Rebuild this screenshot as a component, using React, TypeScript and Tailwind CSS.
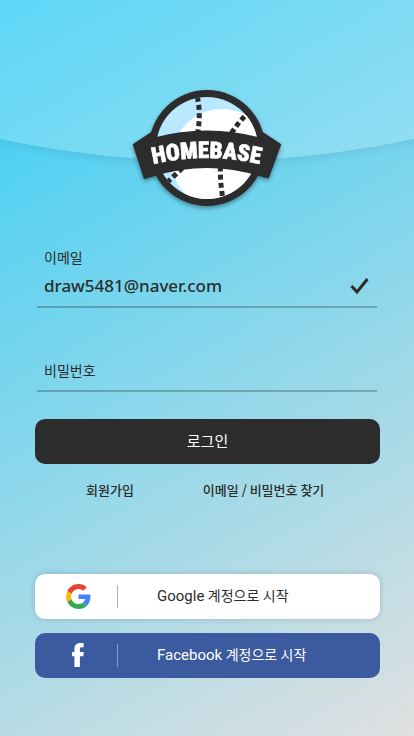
import React from "react";

function HomebaseLogo() {
  return (
    <svg
      role="img"
      aria-label="HOMEBASE"
      viewBox="0 0 160 128"
      className="h-32 w-40 drop-shadow-[0_2px_2px_rgba(0,0,0,0.4)]"
    >
      <defs>
        <clipPath id="ball">
          <circle cx="80" cy="62" r="51" />
        </clipPath>
        <path id="baseline" d="M15 81 Q79.5 63 144 81" />
      </defs>
      <circle cx="80" cy="62" r="58" fill="#2c2c2c" />
      <g clipPath="url(#ball)">
        <rect width="160" height="128" fill="#b9e8ff" />
        <circle cx="95" cy="73.5" r="50.5" fill="#fff" />
        <g fill="none" stroke="#2c2c2c" strokeWidth="5" strokeDasharray="5 3.2">
          <path d="M70.3 11 Q74.2 28 70.4 49" />
          <path d="M117.5 30.5 Q110 38 103 49.5" />
          <path d="M55.5 82 L38 98.5" />
          <path d="M93.4 80.5 Q93 96 95.8 112" />
        </g>
      </g>
      <path
        d="M25 45.5 L5.7 58.3 L17 93.2 L28 90 Q80 74 132 90 L141.7 92.5 L154.3 58.3 L133.5 44.5 L133 51.5 Q80 37.5 27 51.5 Z"
        fill="#2c2c2c"
      />
      <text
        className="font-['Liberation_Sans_Narrow','Roboto_Condensed',Roboto,sans-serif] text-[23px] font-black"
        fill="#fff"
        stroke="#fff"
        strokeWidth="0.6"
        textAnchor="middle"
      >
        <textPath href="#baseline" startOffset="50%">
          HOMEBASE
        </textPath>
      </text>
    </svg>
  );
}

function GoogleIcon() {
  return (
    <svg aria-hidden="true" viewBox="0 0 48 48" className="size-[25px]">
      <path fill="#EA4335" d="M24 9.5c3.54 0 6.71 1.22 9.21 3.6l6.85-6.85C35.9 2.38 30.47 0 24 0 14.62 0 6.51 5.38 2.56 13.22l7.98 6.19C12.43 13.72 17.74 9.5 24 9.5z" />
      <path fill="#4285F4" d="M46.98 24.55c0-1.57-.15-3.09-.38-4.55H24v9.02h12.94c-.58 2.96-2.26 5.48-4.78 7.18l7.73 6c4.51-4.18 7.09-10.36 7.09-17.65z" />
      <path fill="#FBBC05" d="M10.53 28.59c-.48-1.45-.76-2.99-.76-4.59s.27-3.14.76-4.59l-7.98-6.19C.92 16.46 0 20.12 0 24c0 3.88.92 7.54 2.56 10.78l7.97-6.19z" />
      <path fill="#34A853" d="M24 48c6.48 0 11.93-2.13 15.89-5.81l-7.73-6c-2.15 1.45-4.92 2.3-8.16 2.3-6.26 0-11.57-4.22-13.47-9.91l-7.98 6.19C6.51 42.62 14.62 48 24 48z" />
    </svg>
  );
}

function FacebookIcon() {
  return (
    <svg aria-hidden="true" viewBox="0 0 12 24" className="mb-px h-6 w-3" fill="#fff">
      <path d="M2.4 24V13.2H0V9h2.4V6.3C2.4 2.3 4.2 0 8.3 0H11.6v4.3H9.7C8.1 4.3 7.9 4.8 7.9 6v3h3.8l-.4 4.2H7.9V24z" />
    </svg>
  );
}

interface SocialButtonProps {
  icon: React.ReactNode;
  brand: string;
  tone: string;
  divider: string;
}

function SocialButton({ icon, brand, tone, divider }: SocialButtonProps) {
  return (
    <button
      type="button"
      className={`flex h-[45px] w-full items-center rounded-[10px] text-left font-[Roboto,'Noto_Sans_CJK_KR',sans-serif] text-sm ${tone}`}
    >
      <span className="ml-[30px] flex w-[26px] justify-center">{icon}</span>
      <span className={`ml-[26px] h-[23px] w-px ${divider}`} />
      <span className="ml-[39px]">
        <span className="text-[15px]">{brand}</span> 계정으로 시작
      </span>
    </button>
  );
}

export default function App() {
  return (
    <main className="relative min-h-screen overflow-hidden bg-[linear-gradient(150.6deg,#35cef6,#e0e0e0)] pr-[34px] pl-[35px] font-['Noto_Sans_CJK_KR',sans-serif] text-[#2c2c2c]">
      <div className="absolute -top-[1809px] left-1/2 size-[1970px] -translate-x-1/2 rounded-full bg-white/20 shadow-[0_3px_8px_rgba(0,0,0,0.08)]" />

      <div className="relative">
        <header className="flex justify-center pt-[86px] pr-0.5">
          <HomebaseLogo />
        </header>

        <form className="pt-[33px]" onSubmit={(e) => e.preventDefault()}>
          <div className="mr-[3px] ml-[2px] border-b-2 border-[#2c2c2c]/30 pl-[7px]">
            <label htmlFor="email" className="block text-sm leading-5">
              이메일
            </label>
            <div className="flex h-[39px] items-center pb-[2px]">
              <input
                id="email"
                type="email"
                defaultValue="draw5481@naver.com"
                className="min-w-0 flex-1 bg-transparent font-['Noto_Sans',sans-serif] text-[17px] leading-6 font-medium outline-none"
              />
              <svg aria-hidden="true" viewBox="0 0 20 18" className="mr-[7px] h-[18px] w-5">
                <path d="M1.5 9 L7 15 L17.5 2" fill="none" stroke="#2c2c2c" strokeWidth="3" />
              </svg>
            </div>
          </div>

          <div className="mt-[52px] mr-[3px] ml-[2px] border-b-2 border-[#2c2c2c]/30 pl-[7px]">
            <input
              type="password"
              aria-label="비밀번호"
              placeholder="비밀번호"
              className="block h-[30px] w-full bg-transparent pb-[10px] text-sm leading-5 outline-none placeholder:text-[#2c2c2c]"
            />
          </div>

          <button
            type="submit"
            className="mt-[27px] h-[45px] w-full rounded-[10px] bg-[#2c2c2c] text-[15px] text-white"
          >
            로그인
          </button>
        </form>

        <nav className="mt-4 flex pl-[51px] text-[13px] leading-5 font-medium">
          <a href="#signup">회원가입</a>
          <a href="#find" className="ml-[69px]">
            이메일 / 비밀번호 찾기
          </a>
        </nav>

        <div className="mt-[74px] flex flex-col gap-[14px] pb-[58px]">
          <SocialButton
            icon={<GoogleIcon />}
            brand="Google"
            tone="bg-white shadow-[0_0_6px_rgba(0,0,0,0.16)]"
            divider="bg-[#b0b0b0]"
          />
          <SocialButton
            icon={<FacebookIcon />}
            brand="Facebook"
            tone="bg-[#3c5a9f] text-white"
            divider="bg-white/40"
          />
        </div>
      </div>
    </main>
  );
}
